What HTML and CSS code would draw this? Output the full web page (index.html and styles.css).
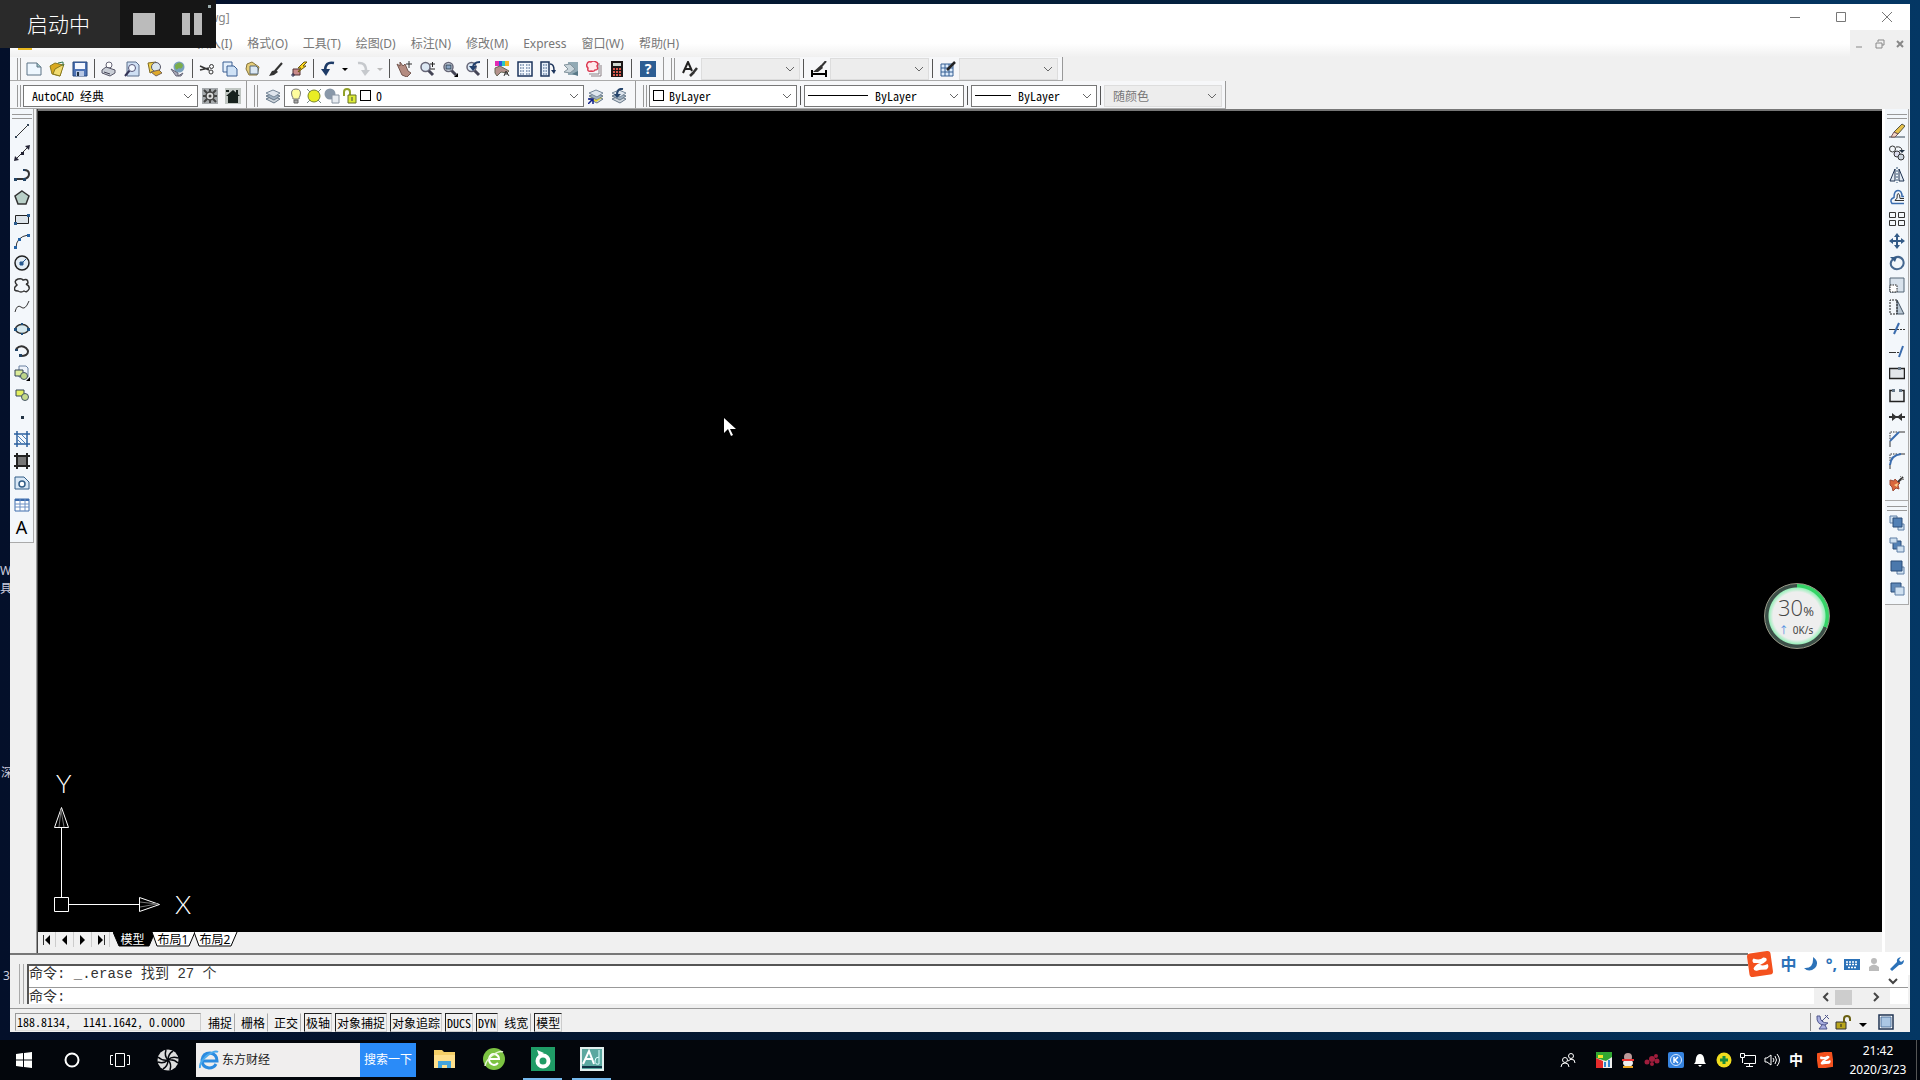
FILE: index.html
```html
<!DOCTYPE html>
<html lang="zh-CN">
<head>
<meta charset="utf-8">
<title>AutoCAD</title>
<link rel="stylesheet" href="styles.css">
</head>
<body>
<svg class="sprite" aria-hidden="true">
  <symbol id="layers" viewBox="0 0 16 16"><path d="M1 11l7-3 7 3-6 4z" fill="#cfd6dd" stroke="#667788"/><path d="M1 8l7-3 7 3-6 4z" fill="#9fb0c0" stroke="#667788"/><path d="M1 5l7-3 7 3-6 4z" fill="#dfe6ee" stroke="#778899"/></symbol>
  <symbol id="lens" viewBox="0 0 16 16"><path d="M9 9l5 5" stroke="#445" stroke-width="3"/><circle cx="6.500" cy="6" r="4.500" fill="#dce8f4" stroke="#667" stroke-width="1.500"/></symbol>
  <symbol id="drop" viewBox="0 0 8 16"><path d="M1 7h6l-3 3z" fill="currentColor"/></symbol>
  <symbol id="sogou" viewBox="0 0 26 26"><rect x="2" y="2" width="22" height="22" rx="3" fill="#f4511e" transform="rotate(-8 13 13)"/><path d="M7 8q6 2 9-1 4 0 3 3-3 3-6 4 4 1 7-1 2 3-1 5-6 0-8 1-4 1-4-2 2-4 6-5-3 0-6 0-2-2 0-4z" fill="#fff"/></symbol>
</svg>

<main class="desktop">
  <span class="desk-label label-w">W<br>具</span>
  <span class="desk-label label-s">深</span>
  <span class="desk-label label-3">3</span>

  <section class="window">
    <header class="titlebar">
      <h1>[Drawing1.dwg]</h1>
      <div class="win-controls">
        <button aria-label="最小化"><svg viewBox="0 0 12 12"><path d="M1 6.500h10" class="ln"/></svg></button>
        <button aria-label="最大化"><svg viewBox="0 0 12 12"><path d="M1.500 1.500h9v9h-9z" class="ln"/></svg></button>
        <button aria-label="关闭"><svg viewBox="0 0 12 12"><path d="M1 1l10 10M11 1l-10 10" class="ln"/></svg></button>
      </div>
    </header>

    <nav class="menubar">
      <svg class="doc-icon" viewBox="0 0 16 16"><path d="M1 16v-6l7-8 7 8v6z" fill="#e8b820"/></svg>
      <div class="menus">
        <button>插入(I)</button><button>格式(O)</button><button>工具(T)</button><button>绘图(D)</button><button>标注(N)</button><button>修改(M)</button><button>Express</button><button>窗口(W)</button><button>帮助(H)</button>
      </div>
      <div class="mdi-controls">
        <button aria-label="最小化图形"><svg viewBox="0 0 12 12"><path d="M2 9h6" class="md"/></svg></button>
        <button aria-label="还原图形"><svg viewBox="0 0 12 12"><path d="M2 5h6v5h-6zM4 4v-2h6v5h-2" class="md"/></svg></button>
        <button aria-label="关闭图形"><svg viewBox="0 0 12 12"><path d="M3 3l6 6M9 3l-6 6" class="md x"/></svg></button>
      </div>
    </nav>

    <div class="toolrow">
      <div class="toolbar std">
        <i class="grip"></i>
        <button aria-label="新建"><svg viewBox="0 0 16 16"><path d="M1 2h10l4 4v8h-14z" fill="#eef7ff" stroke="#5d7285"/><path d="M11 2v4h4" fill="#9fc5c5" stroke="#5d7285"/></svg></button>
        <button aria-label="打开"><svg viewBox="0 0 16 16"><path d="M1 5l5-3 8 2-3 11-8-2z" fill="#d9a920" stroke="#8a7a20"/><path d="M6 8l9-5-4 12-7-2z" fill="#f2dc70" stroke="#8a7a20"/><path d="M9 2l5-1v4" fill="none" stroke="#375"/></svg></button>
        <button aria-label="保存"><svg viewBox="0 0 16 16"><path d="M1 1h14v14h-14z" fill="#4d73b5" stroke="#24467c"/><path d="M3 2h10v6h-10z" fill="#f3f7ff"/><path d="M4 10h8v5h-8z" fill="#b8c8e4"/><path d="M5 11h2v4h-2z" fill="#234"/></svg></button>
        <i class="sep"></i>
        <button aria-label="打印"><svg viewBox="0 0 16 16"><circle cx="8" cy="4" r="3" fill="#fff" stroke="#667"/><path d="M1 9l4-3 9 3v3l-5 3-8-3z" fill="#c9ced6" stroke="#556"/><path d="M3 11l6 2" stroke="#445"/></svg></button>
        <button aria-label="打印预览"><svg viewBox="0 0 16 16"><path d="M3 1h9l3 3v11h-12z" fill="#cfe0f4" stroke="#5a6f8b"/><path d="M6 9l-5 6" stroke="#335" stroke-width="2"/><circle cx="8" cy="7" r="3.500" fill="#f4faff" stroke="#557"/></svg></button>
        <button aria-label="发布"><svg viewBox="0 0 16 16"><path d="M1 2l8-1 2 8-8 3z" fill="#f1d24b" stroke="#806a20"/><circle cx="9" cy="6" r="4.500" fill="#dbe7ef" stroke="#556"/><path d="M4 11l8-2 3 3-6 3z" fill="#dfa92a" stroke="#765"/></svg></button>
        <button aria-label="三维DWF"><svg viewBox="0 0 16 16"><circle cx="9" cy="6" r="5.500" fill="#7aa0bd"/><path d="M5 4q5-5 8 0-1 5-4 3-4 4-4-3" fill="#7bad4b"/><path d="M1 8l7 4v3l5-3-2 3-5 0z" fill="#aab" stroke="#667"/></svg></button>
        <i class="sep"></i>
        <button aria-label="剪切"><svg viewBox="0 0 16 16"><path d="M1 5l9 4M1 9l9-2" stroke="#333" stroke-width="1.500"/><circle cx="12.500" cy="5.500" r="2" class="n"/><circle cx="12" cy="11" r="2" class="n"/></svg></button>
        <button aria-label="复制"><svg viewBox="0 0 16 16"><path d="M1 1h9v10h-9z" fill="#e5f0fb" stroke="#3a5f92"/><path d="M5 5h7l3 3v7h-10z" fill="#cfe2f6" stroke="#3a5f92"/></svg></button>
        <button aria-label="粘贴"><svg viewBox="0 0 16 16"><path d="M2 3l5-2 7 5-2 8-8 0-3-6z" fill="#e6ce79" stroke="#85733a"/><path d="M5 5h6l2 2v6h-8z" fill="#dbe8f4" stroke="#567"/></svg></button>
        <button aria-label="特性匹配"><svg viewBox="0 0 16 16"><path d="M14 2l-7 8" stroke="#333" stroke-width="2"/><path d="M8 9l2 2-4 3-5 1 3-5z" fill="#333"/></svg></button>
        <button aria-label="块编辑器"><svg viewBox="0 0 16 16"><path d="M2 8h7v6h-7z" fill="#c98a8a" stroke="#533"/><path d="M0 14h4M2 12v4" stroke="#335"/><path d="M13 1l-6 6h3l-3 4 8-6h-3l4-4z" fill="#ffd91f" stroke="#6d5a10"/></svg></button>
        <i class="sep"></i>
        <button aria-label="放弃"><svg viewBox="0 0 16 16"><path d="M14 2q-9-2-9 8" fill="none" stroke="#1d3b67" stroke-width="2.500"/><path d="M1 8h9l-4 7z" fill="#1d3b67"/></svg></button>
        <button class="narrow" aria-label="放弃列表"><svg viewBox="0 0 8 16"><use href="#drop"/></svg></button>
        <button class="off" aria-label="重做"><svg viewBox="0 0 16 16"><path d="M3 2q8-1 8 8" fill="none" stroke="#c6c9cd" stroke-width="2.500"/><path d="M6 9h9l-5 6z" fill="#c6c9cd"/></svg></button>
        <button class="narrow off" aria-label="重做列表"><svg viewBox="0 0 8 16"><use href="#drop"/></svg></button>
        <i class="sep"></i>
        <button aria-label="平移"><svg viewBox="0 0 16 16"><path d="M1 3l3 2 0-4 3 4 2-2 3 7 3 2-4 4-5-2z" fill="#b48b80" stroke="#74564f"/><path d="M13 0v7M10 3h6" stroke="#333"/></svg></button>
        <button aria-label="实时缩放"><svg viewBox="0 0 16 16"><use href="#lens"/><path d="M11 3h5M13.500 1v5M11 8h5" stroke="#222"/></svg></button>
        <button aria-label="窗口缩放"><svg viewBox="0 0 16 16"><use href="#lens"/><path d="M4 4h5v4h-5z" fill="#8aa5c5" stroke="#345"/><path d="M16 12v4h-4z" fill="#000"/></svg></button>
        <button aria-label="缩放上一个"><svg viewBox="0 0 16 16"><use href="#lens"/><path d="M15 1q-7 0-7 6" fill="none" stroke="#223f6c" stroke-width="2"/><path d="M4 5h8l-4 5z" fill="#223f6c"/></svg></button>
        <i class="sep"></i>
        <button aria-label="特性"><svg viewBox="0 0 16 16"><path d="M1 0h4v5h-4z" fill="#e22bb4"/><path d="M5 0h3v5h-3z" fill="#3157e0"/><path d="M8 0h3v5h-3z" fill="#28c5c1"/><path d="M11 0h4v5h-4z" fill="#f3b926"/><path d="M1 7l5-2 9 5-2 2-6-1-4 4-2-3z" fill="#b3918b" stroke="#665"/><path d="M10 15l2-5 3 5M11 13h3" class="n"/></svg></button>
        <button aria-label="设计中心"><svg viewBox="0 0 16 16"><path d="M1 1h14v14h-14z" fill="#f5f9ff" stroke="#1d355c" stroke-width="1.500"/><path d="M3 4h4M9 4h4M3 7h4M9 7h4M3 10h4M9 10h4M3 13h4M9 13h4" stroke="#31527f" stroke-dasharray="1.500 1"/></svg></button>
        <button aria-label="工具选项板"><svg viewBox="0 0 16 16"><path d="M1 1h8v14h-8z" fill="#e8f0fa" stroke="#1d355c" stroke-width="1.500"/><path d="M3 4h4M3 7h4M3 10h4M3 13h4" stroke="#31527f" stroke-dasharray="1.500 1"/><path d="M10 3q4 0 4 6" fill="none" stroke="#1d355c" stroke-width="1.500"/><path d="M11 9h5l-2 4z" fill="#1d355c"/></svg></button>
        <button aria-label="图纸集"><svg viewBox="0 0 16 16"><path d="M5 1h10v13h-10z" fill="#91a9b4"/><path d="M1 4l6-1 5 5-5 4-6-1 4-3z" fill="#c9d5db" stroke="#83939d"/><path d="M9 13l6-3v5z" fill="#587887"/></svg></button>
        <button aria-label="标记集"><svg viewBox="0 0 16 16"><path d="M5 15h10v-11M3 13h10v-11" fill="none" stroke="#8b8186"/><path d="M1 3q1-3 4-2 2-2 5 0 3 1 1 4 2 4-2 4-1 2-4 1-4 1-3-3-2-2-1-4z" fill="#ffe9ec" stroke="#dc3a53" stroke-width="1.500"/></svg></button>
        <button aria-label="计算器"><svg viewBox="0 0 16 16"><path d="M2 0h12v16h-12z" fill="#1c1717"/><path d="M4 2h8v3h-8z" fill="#cfd8cf"/><path d="M4 8h8M4 11h8M4 14h8" stroke="#d9584d" stroke-width="2" stroke-dasharray="2 1"/></svg></button>
        <i class="sep"></i>
        <button class="help" aria-label="帮助">?</button>
      </div>
      <div class="toolbar styles">
        <i class="grip"></i>
        <button aria-label="文字样式"><svg viewBox="0 0 16 16"><path d="M1 12l5-11 4 9M3 8h6" fill="none" stroke="#222" stroke-width="2"/><path d="M15 7l-4 5M8 15l4-4" stroke="#333" stroke-width="2.500"/></svg></button>
        <select class="w100" aria-label="文字样式" disabled><option></option></select>
        <i class="sep"></i>
        <button aria-label="标注样式"><svg viewBox="0 0 16 16"><path d="M15 0l-7 8" stroke="#333" stroke-width="2"/><path d="M10 4l2 3-5 4-5 0z" fill="#333"/><path d="M1 9v7M15 9v7M1 13h14" stroke="#000" stroke-width="2"/></svg></button>
        <select class="w100" aria-label="标注样式" disabled><option></option></select>
        <i class="sep"></i>
        <button aria-label="表格样式"><svg viewBox="0 0 16 16"><path d="M1 3h12v12h-12zM1 7h12M1 11h12M5 3v12M9 3v12" fill="#dcebfb" stroke="#345f93"/><path d="M15 1l-8 8" stroke="#222" stroke-width="2.500"/></svg></button>
        <select class="w100" aria-label="表格样式" disabled><option></option></select>
      </div>
    </div>

    <div class="toolrow second">
      <div class="toolbar workspace">
        <i class="grip"></i>
        <select class="w175" aria-label="工作空间"><option>AutoCAD 经典</option></select>
        <button aria-label="工作空间设置"><svg viewBox="0 0 16 16"><path d="M0 0h16v16h-16z" fill="#a5a9ac"/><path d="M2 2l12 12M14 2l-12 12M8 1v14M1 8h14" stroke="#444" stroke-width="2"/><circle cx="8" cy="8" r="4" fill="#ddd" stroke="#444" stroke-width="1.500"/><circle cx="8" cy="8" r="1.500" fill="#444"/></svg></button>
        <button aria-label="我的工作空间"><svg viewBox="0 0 16 16"><path d="M0 0h16v16h-16z" fill="#c0c6c2"/><path d="M8 2l7 6h-2v7h-10v-7h-2z" fill="#18221e"/><path d="M12 2v4M1 3h3" stroke="#18221e" stroke-width="2"/></svg></button>
      </div>
      <div class="toolbar layer">
        <i class="grip"></i>
        <button aria-label="图层特性"><svg viewBox="0 0 16 16"><use href="#layers"/></svg></button>
        <div class="combo">
          <svg viewBox="0 0 16 16"><path d="M5 11q0-2-1-3-2-7 4-7t4 7q-1 1-1 3z" fill="#fffc9e" stroke="#777"/><path d="M6 12h4v3h-4z" fill="#aaa" stroke="#666"/></svg>
          <svg viewBox="0 0 16 16"><path d="M1 1l14 14M15 1l-14 14" stroke="#788"/><circle cx="8" cy="8" r="6" fill="#e9ed23" stroke="#78862c"/></svg>
          <svg viewBox="0 0 16 16"><circle cx="6" cy="6" r="5.500" fill="#8998a9"/><path d="M8 7h7v8h-7z" fill="#e9edf2" stroke="#8894a2"/></svg>
          <svg viewBox="0 0 16 16"><path d="M2 8v-4q0-3 3-3t3 3v3" fill="none" stroke="#91a029" stroke-width="2"/><path d="M6 7h8v8h-8z" fill="#dceb37" stroke="#667026"/><path d="M10 9v4" stroke="#444"/></svg>
          <i class="swatch"></i>
          <select aria-label="图层"><option>0</option></select>
        </div>
        <button aria-label="将对象的图层置为当前"><svg viewBox="0 0 16 16"><use href="#layers"/><path d="M1 9l7 3 7-3-7 5z" fill="#e2d32c"/><path d="M0 11h5v5M5 11l-5 5" fill="none" stroke="#10208a" stroke-width="1.500"/></svg></button>
        <button aria-label="上一个图层"><svg viewBox="0 0 16 16"><use href="#layers"/><path d="M12 1q-6-1-6 6" fill="none" stroke="#27466d" stroke-width="2"/><path d="M3 6h7l-4 4z" fill="#27466d"/></svg></button>
      </div>
      <div class="toolbar props">
        <i class="grip"></i>
        <div class="combo w148"><i class="swatch"></i><select aria-label="颜色控制"><option>ByLayer</option></select></div>
        <i class="sep"></i>
        <div class="combo w160"><i class="line l60"></i><select aria-label="线型控制"><option>ByLayer</option></select></div>
        <i class="sep"></i>
        <div class="combo w126"><i class="line l36"></i><select aria-label="线宽控制"><option>ByLayer</option></select></div>
        <i class="sep"></i>
        <select class="w118" aria-label="打印样式" disabled><option>随颜色</option></select>
      </div>
    </div>

    <div class="work">
      <aside class="side left">
        <div class="vbar">
          <i class="vgrip"></i>
          <button aria-label="直线"><svg viewBox="0 0 16 16"><path d="M2 14l12-12" class="n"/><path d="M1 13h2v2h-2zM13 1h2v2h-2z" fill="#345"/></svg></button>
          <button aria-label="构造线"><svg viewBox="0 0 16 16"><path d="M1 15l14-14" class="n"/><path d="M0 16l1-5 4 4zM16 0l-1 5-4-4zM7 7h3v3h-3z" fill="#223"/></svg></button>
          <button aria-label="多段线"><svg viewBox="0 0 16 16"><path d="M1 12h9q5-1 5-5 0-4-5-4" class="n w"/><path d="M0 11h3v3h-3zM9 11h3v3h-3zM9 2h2v2h-2z" fill="#246"/></svg></button>
          <button aria-label="正多边形"><svg viewBox="0 0 16 16"><path d="M8 2l7 5-3 8h-8l-3-8z" fill="#b9d0c8" stroke="#333" stroke-width="1.500"/></svg></button>
          <button aria-label="矩形"><svg viewBox="0 0 16 16"><path d="M1.500 4.500h13v8h-13z" fill="#dde4ea" stroke="#222"/><path d="M0 11h3v3h-3zM13 3h3v3h-3z" fill="#2b5c8f"/></svg></button>
          <button aria-label="圆弧"><svg viewBox="0 0 16 16"><path d="M2 15q0-11 12-13" class="n"/><path d="M0 13h3v3h-3zM4 5h3v3h-3zM13 1h3v3h-3z" fill="#2563a5"/></svg></button>
          <button aria-label="圆"><svg viewBox="0 0 16 16"><circle cx="8" cy="8" r="7" fill="#e3edf5" stroke="#222" stroke-width="1.500"/><path d="M7 9l5-5M6 7h3v3h-3z" stroke="#27588e" fill="#27588e"/></svg></button>
          <button aria-label="修订云线"><svg viewBox="0 0 16 16"><path d="M3 8q-4-4 1-6 4-1 5 1 5-2 5 3-1 1-2 1 4 2 3 5-2 4-5 2-3 2-6 0-5 0-3-4z" fill="none" stroke="#333" stroke-width="1.500"/></svg></button>
          <button aria-label="样条曲线"><svg viewBox="0 0 16 16"><path d="M1 13q2-8 6-5 4 4 8-6" class="n"/></svg></button>
          <button aria-label="椭圆"><svg viewBox="0 0 16 16"><ellipse cx="8" cy="8" rx="6.500" ry="4.500" fill="#d5e8ee" stroke="#333" stroke-width="1.500"/><path d="M0 7h3v3h-3zM13 7h3v3h-3zM7 2h2v2h-2zM7 12h2v2h-2z" fill="#20517f"/></svg></button>
          <button aria-label="椭圆弧"><svg viewBox="0 0 16 16"><path d="M2 6q5-5 10-1 4 4 0 7-2 1-5 1" class="n w"/><path d="M1 6h3v2h-3zM5 11h3v3h-3z" fill="#246"/></svg></button>
          <button aria-label="插入块"><svg viewBox="0 0 16 16"><path d="M5 1h7l2 2v9h-9z" fill="#eef3fa" stroke="#6880a0"/><path d="M1 5h8v6h-8z" fill="#dcec9a" stroke="#345"/><circle cx="10" cy="11" r="3.500" fill="#bdd58a" stroke="#456"/><path d="M16 12v4h-4z"/></svg></button>
          <button aria-label="创建块"><svg viewBox="0 0 16 16"><path d="M2 3h8v6h-8z" fill="#e4f060" stroke="#345"/><circle cx="11" cy="10" r="3.500" fill="#c5d98c" stroke="#456"/></svg></button>
          <button aria-label="点"><svg viewBox="0 0 16 16"><path d="M7 7h3v3h-3z" fill="#234"/></svg></button>
          <button aria-label="图案填充"><svg viewBox="0 0 16 16"><path d="M3 0v16M13 0v16M0 3h16M0 13h16" stroke="#2a5f9e" stroke-width="1.500"/><path d="M4 5l8 8M4 9l4 4M8 4l5 5" stroke="#4b7fb8"/></svg></button>
          <button aria-label="渐变色"><svg viewBox="0 0 16 16"><path d="M3 3h10v10h-10z" fill="#777"/><path d="M3 0v16M13 0v16M0 3h16M0 13h16" stroke="#222" stroke-width="2"/></svg></button>
          <button aria-label="面域"><svg viewBox="0 0 16 16"><path d="M1 2h9l5 5v7h-14z" fill="#d9e8f6" stroke="#315d87"/><circle cx="8" cy="9" r="3" fill="#fff" stroke="#315d87" stroke-width="1.500"/></svg></button>
          <button aria-label="表格"><svg viewBox="0 0 16 16"><path d="M1 2h14v12h-14z" fill="#fff" stroke="#3c6cad"/><path d="M1 3h14" stroke="#3c6cad" stroke-width="2"/><path d="M1 7h14M1 10h14M6 2v12M11 2v12" stroke="#6c90c4"/></svg></button>
          <button class="mtext" aria-label="多行文字">A</button>
        </div>
      </aside>

      <div class="center">
        <div class="canvas">
          <svg class="ucs" viewBox="0 0 160 150" width="160" height="150" fill="none" stroke="#fff">
            <text x="9" y="26" class="axis">Y</text>
            <text x="128" y="147" class="axis">X</text>
            <path d="M7.500 130.500h14v14h-14zM14.500 130v-70M22 137.500h70M7.500 60.500h14l-7-20zM92.500 130.500v14l20-7z"/>
            <path d="M12 60l2-17 3 17M93 135l17 2-17 3" stroke="#777"/>
          </svg>
          <svg class="cursor" viewBox="0 0 12 18"><path d="M0 0v15l4-4 3 7 2-1-3-6h6z" fill="#fff"/></svg>
          <div class="gauge">
            <span class="pct"><b>30</b>%</span>
            <span class="rate"><em>↑</em>0K/s</span>
          </div>
        </div>
        <div class="tabs">
          <button class="nav" aria-label="第一个"><svg viewBox="0 0 12 12"><path d="M2.500 1v10" class="n"/><path d="M9 1v10l-5-5z"/></svg></button>
          <button class="nav" aria-label="上一个"><svg viewBox="0 0 12 12"><path d="M8 1v10l-5-5z"/></svg></button>
          <button class="nav" aria-label="下一个"><svg viewBox="0 0 12 12"><path d="M3 1v10l5-5z"/></svg></button>
          <button class="nav" aria-label="最后一个"><svg viewBox="0 0 12 12"><path d="M9.500 1v10" class="n"/><path d="M3 1v10l5-5z"/></svg></button>
          <button class="tab active"><svg viewBox="0 0 44 15"><path d="M0 0l6 14h30l6-14z"/></svg><span>模型</span></button>
          <button class="tab"><svg viewBox="0 0 44 15"><path d="M0 0l5 14h32l6-14"/></svg><span>布局1</span></button>
          <button class="tab"><svg viewBox="0 0 44 15"><path d="M0 0l5 14h32l6-14"/></svg><span>布局2</span></button>
        </div>
      </div>

      <aside class="side right">
        <div class="vbar">
          <i class="vgrip"></i>
          <button aria-label="删除"><svg viewBox="0 0 16 16"><path d="M0 14h16" stroke="#345"/><path d="M13 1l3 2-7 8-4-2z" fill="#e6c14b" stroke="#554"/><path d="M5 9l4 2-3 3h-4z" fill="#f2d3c5" stroke="#755"/></svg></button>
          <button aria-label="复制对象"><svg viewBox="0 0 16 16"><circle cx="3.500" cy="4" r="3" class="n"/><circle cx="8" cy="9" r="3" fill="#dde" stroke="#333"/><circle cx="12" cy="12" r="3" fill="#ccd5df" stroke="#333"/><path d="M7 2q6-1 6 4" class="n"/><path d="M10 5h6l-3 3z" fill="#234"/></svg></button>
          <button aria-label="镜像"><svg viewBox="0 0 16 16"><path d="M6 2v12h-5zM10 2v12h5z" fill="#e1e9f2" stroke="#1c3150"/><path d="M8 0v16" stroke="#357" stroke-dasharray="2 1"/></svg></button>
          <button aria-label="偏移"><svg viewBox="0 0 16 16"><path d="M15 14.500h-12q-3-4 2-6 0-7 4-7t4 6h2" fill="none" stroke="#3a6cae" stroke-width="1.500"/><path d="M15 11.500h-9q0-1 2-2 0-5 1-5 2 0 2 5h4" class="n"/></svg></button>
          <button aria-label="阵列"><svg viewBox="0 0 16 16"><path d="M.500 1.500h6v5h-6zM9.500 1.500h6v5h-6zM.500 9.500h6v5h-6zM9.500 9.500h6v5h-6z" class="n"/></svg></button>
          <button aria-label="移动"><svg viewBox="0 0 16 16"><path d="M8 2v12M2 8h12" stroke="#345b87" stroke-width="2"/><path d="M5 4l3-4 3 4zM5 12l3 4 3-4zM4 5l-4 3 4 3zM12 5l4 3-4 3z" fill="#345b87"/></svg></button>
          <button aria-label="旋转"><svg viewBox="0 0 16 16"><path d="M5 3q6-3 9 2 2 5-2 8-5 3-9-1-3-4 1-8" fill="none" stroke="#45678f" stroke-width="2"/><path d="M1 2h7l-2 5z" fill="#345b87"/></svg></button>
          <button aria-label="缩放"><svg viewBox="0 0 16 16"><path d="M1 1h14v14h-14z" fill="#d8e2ec" stroke="#567"/><path d="M1 8h7v7h-7z" fill="#fff" stroke="#222" stroke-dasharray="1.500 1"/></svg></button>
          <button aria-label="拉伸"><svg viewBox="0 0 16 16"><path d="M8 1v14h7z" fill="#b9c7d4" stroke="#456"/><path d="M8 1h-7v14h7z" fill="none" stroke="#222" stroke-dasharray="2 1"/></svg></button>
          <button aria-label="修剪"><svg viewBox="0 0 16 16"><path d="M0 8.500h6" class="n"/><path d="M8 8.500h8" class="n" stroke-dasharray="2 1"/><path d="M5 13l5-11" class="b"/></svg></button>
          <button aria-label="延伸"><svg viewBox="0 0 16 16"><path d="M0 9.500h5" class="n"/><path d="M5 9.500h7" class="n" stroke-dasharray="2 1"/><path d="M10 14l4-11" class="b"/></svg></button>
          <button aria-label="打断于点"><svg viewBox="0 0 16 16"><path d="M.500 3.500h15v10h-15z" fill="#e2e6ea" stroke="#222" stroke-width="1.500"/><path d="M9 2h3v3h-3z" fill="#678"/></svg></button>
          <button aria-label="打断"><svg viewBox="0 0 16 16"><path d="M4 3.500h-3v11h14v-11h-3" fill="#eef1f4" stroke="#222" stroke-width="1.500"/><path d="M3 2h3v3h-3zM10 2h3v3h-3z" fill="#678"/></svg></button>
          <button aria-label="合并"><svg viewBox="0 0 16 16"><path d="M0 8h16" class="n w"/><path d="M3 4l5 4-5 4zM13 4l-5 4 5 4z" fill="#333"/></svg></button>
          <button aria-label="倒角"><svg viewBox="0 0 16 16"><path d="M1 16v-6M10 1h6" class="n"/><path d="M1 8v-7h8" class="n" stroke-dasharray="1.500 1"/><path d="M1 10l9-9" class="b"/></svg></button>
          <button aria-label="圆角"><svg viewBox="0 0 16 16"><path d="M1 16v-5M10 1h6" class="n"/><path d="M1 8v-7h8" class="n" stroke-dasharray="1.500 1"/><path d="M1 12q1-10 11-11" class="b"/></svg></button>
          <button aria-label="分解"><svg viewBox="0 0 16 16"><path d="M1 5l4 1 1-2 2 2 3 2-2 2 1 4-3-1-3 3-1-4-2-2z" fill="#d9663b" stroke="#a04d38"/><path d="M5 10l4-2-1 4z" fill="#ffd08b"/><path d="M9 7l5-5" class="n w"/><path d="M11 1l4 4M12 5l3-1" stroke="#888"/></svg></button>
        </div>
        <div class="vbar order">
          <i class="vgrip"></i>
          <button aria-label="前置"><svg viewBox="0 0 16 16"><path d="M1 1h7v7h-7zM9 9h6v6h-6z" fill="#cfe0f0" stroke="#5f7fa5"/><path d="M4 3h9v9h-9z" fill="#5280b5" stroke="#2b4c78"/></svg></button>
          <button aria-label="后置"><svg viewBox="0 0 16 16"><path d="M4 4h8v8h-8z" fill="#5280b5" stroke="#2b4c78"/><path d="M1 1h7v5h-7zM8 9h7v6h-7z" fill="#cfe0f0" stroke="#5f7fa5"/></svg></button>
          <button aria-label="置于对象之上"><svg viewBox="0 0 16 16"><path d="M8 8h7v7h-7z" fill="#cfe0f0" stroke="#5f7fa5"/><path d="M2 2h11v10h-11z" fill="#4b78ac" stroke="#2b4c78"/></svg></button>
          <button aria-label="置于对象之下"><svg viewBox="0 0 16 16"><path d="M2 2h10v9h-10z" fill="#5f88b8" stroke="#2b4c78"/><path d="M6 6h9v8h-9z" fill="#cfe0f0" stroke="#5f7fa5"/></svg></button>
        </div>
      </aside>
    </div>

    <section class="command">
      <i class="cgrip"></i>
      <div class="cmd-body">
        <div class="cmd-history"><p>命令: _.erase 找到 27 个</p><svg class="chev" viewBox="0 0 12 12"><path d="M2 4l4 4 4-4"/></svg></div>
        <div class="cmd-line">
          <label for="cmd">命令:</label><input id="cmd" type="text">
          <div class="hscroll">
            <svg class="chev" viewBox="0 0 12 12"><path d="M8 2l-4 4 4 4"/></svg><i class="thumb"></i><svg class="chev end" viewBox="0 0 12 12"><path d="M4 2l4 4-4 4"/></svg>
          </div>
        </div>
      </div>
    </section>

    <footer class="status">
      <output class="coords">188.8134,&nbsp; 1141.1642, 0.0000</output>
      <div class="toggles">
        <button>捕捉</button><button>栅格</button><button>正交</button><button class="on">极轴</button><button class="on">对象捕捉</button><button class="on">对象追踪</button><button class="on">DUCS</button><button class="on">DYN</button><button>线宽</button><button class="on">模型</button>
      </div>
      <div class="status-tray">
        <svg viewBox="0 0 16 16"><path d="M2 2q-1 9 8 9l3-2q-8 0-8-7zM7 7l6-6M10 1l4 4M7 11l-3 4h8l-2-4" fill="#a9afe0" stroke="#4f568c"/></svg>
        <svg viewBox="0 0 16 16"><path d="M1 8h10v7h-10z" fill="#b9a51b" stroke="#333"/><path d="M9 8v-3q0-3 3-3t3 3v2" fill="none" stroke="#6a6011" stroke-width="2"/><path d="M6 10v3" stroke="#222"/></svg>
        <svg viewBox="0 0 16 16"><path d="M4 9h8l-4 4z"/></svg>
        <svg class="end" viewBox="0 0 16 16"><path d="M1 1h14v14h-14z" fill="#fff" stroke="#1f3352" stroke-width="1.500"/><path d="M3 3h10v10h-10z" fill="#abc7e4" stroke="#55779f"/></svg>
      </div>
    </footer>
  </section>

  <div class="recorder">
    <strong>启动中</strong>
    <div class="rec-buttons">
      <button aria-label="停止"><svg viewBox="0 0 22 22"><path d="M0 0h22v22h-22z"/></svg></button>
      <button aria-label="暂停"><svg viewBox="0 0 22 22"><path d="M1 0h8v22h-8zM13 0h8v22h-8z"/></svg></button>
    </div>
    <i class="rec-dot"></i>
  </div>

  <div class="ime">
    <svg class="logo" viewBox="0 0 26 26"><use href="#sogou"/></svg>
    <span>中</span>
    <svg viewBox="0 0 16 16"><path d="M10 1q7 5 2 11-6 5-11 0 10 1 9-11z"/></svg>
    <span>°,</span>
    <svg viewBox="0 0 16 16"><path d="M0 3h16v11h-16z"/><path d="M2 6h12M2 8.500h12M4 11.500h8" stroke="#fff" stroke-width="1.500" stroke-dasharray="2 1"/></svg>
    <svg class="gray" viewBox="0 0 16 16"><circle cx="8" cy="5" r="3"/><path d="M3 15v-4q5-5 10 0v4z"/></svg>
    <svg viewBox="0 0 16 16"><path d="M1 13l7-7q-1-4 4-5l-2 3 2 2 3-2q0 5-5 5l-7 6z"/></svg>
  </div>
</main>

<footer class="taskbar">
  <button aria-label="开始"><svg viewBox="0 0 16 16" fill="#fff"><path d="M0 2l7-1v6.500h-7zM8 1l8-1v7.500h-8zM0 8.500h7v6.500l-7-1zM8 8.500h8v7.500l-8-1z"/></svg></button>
  <button aria-label="Cortana"><svg viewBox="0 0 16 16"><circle cx="8" cy="8" r="6.500" fill="none" stroke="#fff" stroke-width="2"/></svg></button>
  <button aria-label="任务视图"><svg class="w20" viewBox="0 0 20 16"><path d="M5.500 1.500h9v13h-9zM3 3.500h-2.500v9h2.500M17 3.500h2.500v9h-2.500" fill="none" stroke="#fff"/></svg></button>
  <button aria-label="浏览器"><svg class="w22" viewBox="0 0 22 22"><circle cx="11" cy="11" r="10.500" fill="#ddd"/><path d="M11 11q-6 1-10-3M11 11q0-6 5-9M11 11q6-1 10 3M11 11q0 6-5 9M11 11q-4-4-2-10M11 11q4-4 10-2M11 11q4 4 2 10M11 11q-4 4-10 2" fill="none" stroke="#05070c" stroke-width="1.500"/></svg></button>
  <form class="search">
    <svg viewBox="0 0 20 20"><path d="M17 14q-2 4-7 4-7-1-7-8 1-7 8-7 7 1 7 8h-14" fill="none" stroke="#2c8be0" stroke-width="3"/><path d="M1 18q-1-6 8-13 7-5 10-3" fill="none" stroke="#4aa9ee" stroke-width="2"/></svg>
    <input type="text" value="东方财经" aria-label="搜索">
    <button type="button">搜索一下</button>
  </form>
  <div class="apps">
    <button aria-label="文件资源管理器"><svg viewBox="0 0 24 24"><path d="M1 3h8l2 2h11v16h-21z" fill="#f5cf68"/><path d="M1 8h21v13h-21z" fill="#ffe08c"/><path d="M5 21v-7h13v7h-4v-3h-5v3z" fill="#45a4dd"/></svg></button>
    <button aria-label="360浏览器"><svg viewBox="0 0 24 24"><circle cx="12" cy="12" r="11" fill="#7cc242"/><path d="M16 16q-2 2-4 2-5-1-5-6 1-5 5-5 5 1 5 5h-9" fill="none" stroke="#fff" stroke-width="2"/><path d="M3 19q1-6 8-11 7-5 10-3" fill="none" stroke="#e8f7d8" stroke-width="1.500"/></svg></button>
    <button class="run" aria-label="录屏"><svg viewBox="0 0 24 24"><path d="M0 0h24v24h-24z" fill="#1f9c66"/><circle cx="12" cy="14" r="5.500" fill="none" stroke="#fff" stroke-width="4"/><path d="M6 3l7 3-5 3z" fill="#fff"/></svg></button>
    <button class="run" aria-label="AutoCAD"><svg viewBox="0 0 24 24"><path d="M0 0h24v24h-24z" fill="#e3efee"/><path d="M2 2h20v20h-20z" fill="#5ba8a0"/><path d="M3 17l6-13 5 13M5 12h8" fill="none" stroke="#fff" stroke-width="2"/><path d="M19 3v14M19 10q-4 0-4 4t4 3" fill="none" stroke="#dff" /><path d="M2 20h20" stroke="#134" stroke-width="2"/></svg></button>
  </div>
  <div class="tray">
    <svg class="people" viewBox="0 0 16 16"><circle cx="11" cy="4" r="2.500" class="wn"/><circle cx="5" cy="8" r="2.500" class="wn"/><path d="M1 15q0-4 4-4t4 4M8 9q3-3 6-1l1 3" class="wn"/></svg>
    <svg viewBox="0 0 16 16"><path d="M0 0h16v16h-16z" fill="#eee"/><path d="M0 0h16v5l-6 4-10-3z" fill="#31a832"/><path d="M2 3h5v3h-5z" fill="#f2e629"/><path d="M0 6l7 3v7h-7z" fill="#e62b2b"/><path d="M9 10v5M13 8v7" stroke="#3586ce" stroke-width="2"/></svg>
    <svg viewBox="0 0 16 16"><circle cx="8" cy="5" r="4" fill="#b99"/><ellipse cx="8" cy="11" rx="5" ry="4" fill="#eee"/><path d="M2 7h12v2h-12z" fill="#e33"/><path d="M3 15h10" stroke="#e9a321" stroke-width="2"/></svg>
    <svg viewBox="0 0 16 16" fill="#a01d3c"><circle cx="3" cy="10" r="2.500"/><circle cx="8" cy="7" r="3"/><circle cx="12" cy="4" r="2"/><circle cx="13" cy="9" r="2.500"/><circle cx="8" cy="12" r="2"/></svg>
    <svg viewBox="0 0 16 16"><rect width="16" height="16" rx="2" fill="#3683df"/><circle cx="8" cy="8" r="5.500" fill="none" stroke="#d9e9ff"/><path d="M6 5v6M10 5l-3 3 3 3" fill="none" stroke="#fff" stroke-width="1.500"/></svg>
    <svg viewBox="0 0 16 16"><path d="M2 12q2-2 2-6 1-4 4-4t4 4q0 4 2 6zM6 13h4l-2 2z" fill="#fff"/></svg>
    <svg viewBox="0 0 16 16"><circle cx="8" cy="8" r="7.500" fill="#f0dc1e"/><path d="M8 4v8M4 8h8" stroke="#198a3c" stroke-width="3"/></svg>
    <svg viewBox="0 0 16 16"><path d="M4 3.500h11.500v8h-11.500M9.500 12v3M6 14.500h7M0.500 1.500h4v4h-4zM2.500 6v5" class="wn"/></svg>
    <svg viewBox="0 0 16 16"><path d="M1 6h2l4-3v10l-4-3h-2zM9 6q2 2 0 4M11 4q3 4 0 8M13 2q5 6 0 12" class="wn"/></svg>
    <span>中</span>
    <svg class="sg" viewBox="2 2 22 22"><use href="#sogou" width="26" height="26"/></svg>
    <time>21:42<br>2020/3/23</time>
  </div>
</footer>
</body>
</html>
```
FILE: styles.css
```css
* { box-sizing: border-box; }
body {
  margin: 0;
  height: 100vh;
  display: flex;
  flex-direction: column;
  overflow: hidden;
  font: 12px/16px "Noto Sans", "Noto Sans CJK SC", sans-serif;
  color: #000;
}
button, select, input { font: inherit; color: inherit; margin: 0; padding: 0; border: 0; background: none; border-radius: 0; }
select { appearance: none; }
svg { display: block; width: 16px; height: 16px; flex: none; }
.sprite { position: absolute; width: 0; height: 0; }
.n { fill: none; stroke: #333; }
.b { fill: none; stroke: #3a6cae; stroke-width: 2; }
.w { stroke-width: 2; }
.wn { fill: none; stroke: #fff; }

/* desktop */
.desktop {
  position: relative;
  flex: 1;
  min-height: 0;
  display: flex;
  padding: 4px 10px 8px;
  background: linear-gradient(90deg, #04102a, #031a33 50%, #043764);
}
.desk-label { position: absolute; color: #ccd; font-size: 12px; line-height: 18px; }
.label-w { left: 0; top: 562px; }
.label-s { left: 1px; top: 764px; }
.label-3 { left: 3px; top: 967px; }

.window { position: relative; flex: 1; display: flex; flex-direction: column; min-width: 0; background: #f0f0f0; }

.titlebar { display: flex; justify-content: space-between; height: 26px; background: #fff; color: #888; }
.titlebar h1 { margin: 0 0 0 130px; font-size: 12px; font-weight: 400; line-height: 28px; }
.win-controls { display: flex; }
.win-controls button { width: 46px; display: grid; place-items: center; }
.win-controls svg { width: 12px; height: 12px; }
.ln { fill: none; stroke: #777; }

.menubar { display: flex; height: 27px; background: linear-gradient(#fff 50%, #f0f0f0); color: #777; }
.doc-icon { margin: 4px 0 0 7px; }
.menus { display: flex; gap: 15px; padding-left: 164px; }
.mdi-controls { display: flex; align-items: center; margin-left: auto; background: #f0f0f0; }
.mdi-controls button { width: 20px; display: grid; place-items: center; }
.mdi-controls svg { width: 12px; height: 12px; }
.md { fill: none; stroke: #888; }
.md.x { stroke-width: 2; }

/* horizontal toolbars */
.toolrow { display: flex; height: 24px; }
.toolrow.second { height: 28px; }
.toolbar { display: flex; align-items: center; height: 100%; padding: 0 4px 0 7px; border-right: 1px solid #999; border-bottom: 1px solid #aaa; background: #f6f7f9; }
.second .toolbar { padding-top: 2px; }
.toolbar button { width: 23px; height: 22px; display: grid; place-items: center; flex: none; }
.toolbar .narrow { width: 12px; }
.narrow svg { width: 8px; }
.toolbar .off { color: #bbb; }
.grip { width: 4px; height: 22px; margin-right: 2px; border: solid #999; border-width: 0 1px; flex: none; }
.sep { width: 1px; height: 19px; margin: 0 3px; background: #555; flex: none; }
.toolbar .help { width: 16px; height: 16px; margin: 0 7px 0 6px; background: #2c5d93; color: #fff; font-weight: 700; font-size: 14px; line-height: 16px; }
.std { width: 654px; }
.std .grip { margin-right: 1px; }
.std .sep { margin-right: 2px; }
.styles .grip, .layer .grip { margin-right: 3px; }
.toolbar select, .combo {
  height: 22px;
  border: 1px solid #777;
  background-color: #fff;
  flex: none;
}
.toolbar select {
  padding: 0 18px 0 8px;
  font: 12px/16px "Noto Sans Mono CJK SC", "Liberation Sans", "Noto Sans CJK SC", monospace;
  background-repeat: no-repeat;
  background-position: right 4px center;
  background-image: url("data:image/svg+xml,%3Csvg xmlns='http://www.w3.org/2000/svg' width='10' height='8'%3E%3Cpath d='M1 2l4 4 4-4' fill='none' stroke='%23666'/%3E%3C/svg%3E");
}
.toolbar select:disabled { border-color: #ddd; background-color: #ededed; color: #777; opacity: 1; }
.w100 { width: 99px; }
.w118 { width: 118px; }
.w175 { width: 175px; }
.workspace { width: 237px; }
.second .workspace { padding-right: 0; }
.combo { display: flex; align-items: center; gap: 2px; width: 300px; padding-left: 3px; }
.toolbar .combo select { flex: 1; height: 20px; border: 0; padding-left: 3px; background-color: transparent; }
.combo.w148 { width: 148px; }
.combo.w160 { width: 160px; }
.combo.w126 { width: 126px; }
.swatch { width: 11px; height: 11px; border: 1px solid #000; flex: none; }
.line { height: 1px; background: #000; flex: none; margin-right: 2px; }
.l60 { width: 60px; }
.l36 { width: 36px; }
.layer { width: 389px; }
.props { padding-right: 3px; }

/* drawing area */
.work { flex: 1; min-height: 0; display: grid; grid-template-columns: 27px 1fr 28px; }
.side.left { border-right: 1px solid #999; }
.side.right { border-left: 3px solid #fff; }
.vbar { display: flex; flex-direction: column; align-items: center; width: 24px; padding: 3px 0 6px; background: #f3f7fb; border-right: 1px solid #aaa; border-bottom: 1px solid #aaa; }
.vbar button { width: 22px; height: 22px; display: grid; place-items: center; }
.vgrip { width: 20px; height: 5px; margin: 2px 0 1px; border: solid #999; border-width: 1px 0; }
.left .vbar { padding-bottom: 4px; }
.right .order { padding: 3px 0 4px; }
.vbar .mtext { font: 18px/22px "Noto Sans", sans-serif; }
.center { display: flex; flex-direction: column; min-width: 0; border-left: 1px solid #444; }
.canvas { position: relative; flex: 1; border-top: 2px solid #777; background: #000; }
.ucs { position: absolute; left: 9px; bottom: 15px; width: 160px; height: 150px; }
.axis { fill: #fff; stroke: none; font: 300 26px Lato, sans-serif; }
.cursor { position: absolute; left: 686px; top: 307px; width: 12px; height: 18px; }

.gauge {
  position: absolute;
  right: 52px;
  top: 472px;
  width: 66px;
  height: 66px;
  padding: 11px 10px 0 8px;
  border: 1px solid #998;
  border-radius: 50%;
  background: radial-gradient(circle, #eee 0 24px, #9df0bd 28px, transparent 29px), conic-gradient(#35d467 0 31%, #3c4f48 31%);
  color: #444;
  text-align: center;
}
.gauge span { display: block; white-space: nowrap; }
.pct { font: 13px/24px "Open Sans", sans-serif; }
.pct b { font-size: 22px; font-weight: 300; }
.rate { font-size: 10px; line-height: 14px; }
.rate em { margin-right: 4px; color: #4b8de0; font-style: normal; }

.tabs { display: flex; height: 21px; padding-bottom: 6px; }
.nav { width: 18px; display: grid; place-items: center; border-right: 1px solid #ccc; }
.nav svg { width: 12px; height: 12px; }
.tab { position: relative; width: 42px; height: 15px; font-size: 12px; line-height: 13px; }
.tab svg { position: absolute; left: 0; top: 0; width: 44px; height: 15px; fill: #fff; stroke: #000; }
.tab span { position: relative; }
.tab.active { width: 39px; margin-left: 3px; color: #fff; }
.tab.active svg { fill: #000; }

/* command window */
.command { display: flex; height: 56px; padding: 9px 2px 4px 9px; border-top: 2px solid #777; border-bottom: 1px solid #999; }
.cgrip { width: 5px; margin-right: 3px; border: solid #aaa; border-width: 0 1px; }
.cmd-body { flex: 1; border: solid #555; border-width: 2px 0 0 2px; background: #fff; font: 14px/18px "Liberation Mono", "Noto Sans CJK SC", monospace; color: #333; }
.cmd-history, .cmd-line { display: flex; justify-content: space-between; align-items: center; }
.cmd-history { align-items: flex-start; height: 22px; border-bottom: 1px solid #999; padding-right: 9px; }
.cmd-history p { margin: 0; line-height: 16px; }
.cmd-history .chev { align-self: flex-end; }
.cmd-line { height: 18px; padding-right: 18px; }
.cmd-line input { flex: 1; min-width: 0; height: 18px; padding-left: 4px; outline: 0; }
.hscroll { display: flex; align-items: center; width: 76px; height: 18px; padding: 0 8px 0 6px; background: #f0f0f0; }
.thumb { width: 17px; height: 15px; margin-left: 3px; background: #cdcdcd; }
.chev { width: 12px; height: 12px; fill: none; stroke: #444; stroke-width: 2; }
.end { margin-left: auto; }

/* status bar */
.status { display: flex; align-items: center; height: 23px; padding: 3px 16px 0 5px; }
.coords { width: 186px; height: 18px; padding-left: 1px; border: 1px solid #999; border-right-color: #ccc; border-bottom-color: #ddd; font: 12px/16px "Noto Sans Mono CJK SC", "Liberation Sans", monospace; white-space: pre; }
.toggles { display: flex; gap: 3px; margin-left: 4px; }
.toggles button { height: 19px; padding: 0 2px; border: 1px solid transparent; border-right-color: #aaa; font: 12px/17px "Noto Sans Mono CJK SC", "Liberation Sans", "Noto Sans CJK SC", monospace; }
.toggles .on { padding: 0 1px; border-color: #222 #ccc #ccc #222; }
.status-tray { display: flex; align-items: center; gap: 4px; width: 84px; height: 18px; margin-left: auto; padding-left: 4px; border-left: 1px solid #888; }

/* recorder overlay */
.recorder { position: absolute; left: 0; top: 0; display: flex; width: 216px; height: 48px; background: #2a2a2a; color: #fff; }
.recorder strong { width: 120px; padding-left: 27px; font-size: 21px; font-weight: 300; line-height: 48px; }
.rec-buttons { flex: 1; display: flex; align-items: center; gap: 26px; padding-left: 13px; background: #161616; }
.rec-buttons svg { width: 22px; height: 22px; fill: #bbb; }
.rec-dot { position: absolute; right: 5px; top: 5px; width: 3px; height: 3px; background: #9aa; }

/* input method bar */
.ime { position: absolute; right: 10px; bottom: 65px; display: flex; align-items: center; justify-content: space-between; width: 162px; height: 23px; padding-right: 5px; background: #fff; color: #2c72b8; font-size: 16px; font-weight: 700; }
.ime svg { fill: #2c72b8; }
.ime .gray { fill: #bbb; }
.ime .logo { width: 28px; height: 28px; margin-left: -2px; }

/* taskbar */
.taskbar { display: flex; align-items: center; height: 40px; background: #03060c; color: #fff; }
.taskbar > button { width: 48px; height: 40px; display: grid; place-items: center; }
.taskbar .w20 { width: 20px; }
.taskbar .w22 { width: 22px; height: 22px; }
.search { display: flex; align-items: center; width: 220px; height: 34px; margin-left: 4px; padding-left: 3px; background: #f0eeee; color: #222; }
.search svg { width: 20px; height: 20px; }
.search input { flex: 1; min-width: 0; padding-left: 3px; }
.search button { width: 56px; height: 34px; background: #2a8bf8; color: #fff; }
.apps { display: flex; gap: 10px; padding-left: 9px; }
.apps button { width: 39px; height: 40px; display: grid; place-items: center; border-bottom: 2px solid transparent; }
.apps svg { width: 24px; height: 24px; }
.apps .run { border-bottom-color: #76b9ed; }
.tray { display: flex; align-items: center; gap: 8px; height: 40px; margin-left: auto; margin-right: 3px; padding-right: 4px; border-right: 1px solid #555; }
.tray .people { margin-right: 12px; }
.tray span { width: 16px; font-size: 14px; font-weight: 700; text-align: center; }
.tray .sg { margin-left: 5px; }
.tray time { width: 71px; padding-left: 3px; font: 12px/19px "Noto Sans", sans-serif; text-align: center; }
```
